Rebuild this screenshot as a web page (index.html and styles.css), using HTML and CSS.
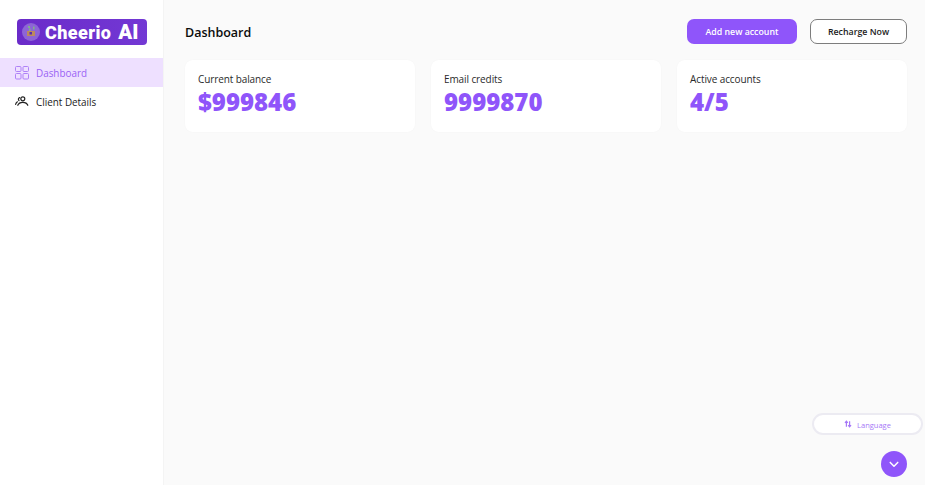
FILE: index.html
```html
<!DOCTYPE html>
<html lang="en">
<head>
<meta charset="utf-8">
<title>Cheerio AI Dashboard</title>
<link rel="stylesheet" href="styles.css">
</head>
<body>
<div class="app">
  <aside class="sidebar">
    <div class="logo">
      <svg class="logo-mark" viewBox="0 0 18 18" width="18" height="18">
        <circle cx="9" cy="9" r="9" fill="#8d64d6"/>
        <rect x="5" y="8" width="8" height="5" fill="#bd8a5e"/>
        <rect x="6" y="3" width="2" height="2" fill="#7fb08a"/>
        <rect x="7" y="5.500" width="1.500" height="2.500" fill="#7fb08a"/>
        <rect x="11" y="3.500" width="1.500" height="3" fill="#7fb08a"/>
        <rect x="7.500" y="9" width="2.500" height="2.500" fill="#5a2fb0"/>
      </svg>
      <span class="logo-text">Cheerio</span><span class="logo-ai">AI</span>
    </div>
    <nav class="nav">
      <a class="nav-item active">
        <svg class="nav-icon nav-icon-light" viewBox="0 0 14 14" width="14" height="14" fill="none" stroke="currentColor" stroke-width="1">
          <rect x=".5" y=".5" width="5.500" height="5" rx="1"/>
          <rect x="8" y=".5" width="5.500" height="5" rx="1"/>
          <rect x=".5" y="7.500" width="5.500" height="5.500" rx="1"/>
          <rect x="8" y="7.500" width="5.500" height="5.500" rx="1"/>
        </svg>
        <span>Dashboard</span>
      </a>
      <a class="nav-item">
        <svg class="nav-icon" viewBox="0 0 14 14" width="14" height="14" fill="none" stroke="currentColor" stroke-width="1.200" stroke-linecap="round">
          <circle cx="7.800" cy="3.800" r="2"/>
          <path d="M2.800 10.300c.7-2 2.600-3 5-3s4.300 1 5 3"/>
          <path d="M4.600 2.600a1.800 1.800 0 0 0-.6 3M2.400 6.800C1.500 7.400 .9 8.200 .6 9.400"/>
        </svg>
        <span>Client Details</span>
      </a>
    </nav>
  </aside>
  <main class="main">
    <header class="topbar">
      <h1 class="title">Dashboard</h1>
      <div class="actions">
        <button class="btn btn-primary">Add new account</button>
        <button class="btn btn-outline">Recharge Now</button>
      </div>
    </header>
    <section class="cards">
      <div class="card"><div class="card-label">Current balance</div><div class="card-value">$999846</div></div>
      <div class="card"><div class="card-label">Email credits</div><div class="card-value">9999870</div></div>
      <div class="card"><div class="card-label">Active accounts</div><div class="card-value">4/5</div></div>
    </section>
  </main>
</div>
<button class="lang">
  <svg viewBox="0 0 10 10" width="8" height="8" fill="none" stroke="currentColor" stroke-width="1.500">
    <path d="M3 8.500V2M1.200 3.500 3 1.500l1.800 2M7 1.500V8M5.200 6.500 7 8.500l1.800-2"/>
  </svg>
  <span class="lang-text">Language</span>
</button>
<button class="fab" aria-label="Collapse">
  <svg viewBox="0 0 12 8" width="10" height="7" fill="none" stroke="#fff" stroke-width="1.800" stroke-linecap="round" stroke-linejoin="round">
    <path d="M1.500 1.500 6 6l4.500-4.500"/>
  </svg>
</button>
</body>
</html>
```

FILE: styles.css
```css
* { box-sizing: border-box; }
html, body { margin: 0; height: 100%; }
body {
  font-family: "Open Sans", "Noto Sans", "Liberation Sans", sans-serif;
  background: #fafafa;
  color: #111;
  overflow: hidden;
}
.app { display: flex; height: 485px; }
.sidebar {
  width: 164px;
  flex: none;
  background: #fff;
  border-right: 1px solid #f4f4f4;
  padding-top: 19px;
}
.logo {
  display: flex;
  align-items: center;
  width: 130px;
  height: 26px;
  margin: 0 0 13px 17px;
  padding-left: 5px;
  border-radius: 4px;
  background: linear-gradient(90deg, #6a2bc9, #7338d4);
  color: #fff;
  font-family: "Roboto", "Open Sans", sans-serif;
  font-weight: 900;
}
.logo-mark { flex: none; margin-right: 5px; }
.logo-text { font-size: 18px; letter-spacing: .4px; }
.logo-ai { font-size: 20.500px; margin-left: 7px; }
.nav { display: flex; flex-direction: column; }
.nav-item {
  display: flex;
  align-items: center;
  height: 29px;
  padding-left: 15px;
  gap: 7px;
  font-size: 9.900px;
  color: #222;
}
.nav-item.active { background: #eee0ff; color: #9a63f5; }
.nav-icon { flex: none; }
.nav-icon-light { opacity: .75; }
.main { flex: 1; padding: 19px 18px 0 21px; min-width: 0; }
.topbar {
  display: flex;
  justify-content: space-between;
  align-items: center;
  height: 25px;
  margin-bottom: 16px;
}
.title { margin: 0; padding-top: 1px; font-size: 12.500px; font-weight: 600; color: #0c0c0c; }
.actions { display: flex; gap: 13px; }
.btn {
  height: 25px;
  border-radius: 7px;
  font-family: inherit;
  font-size: 8.800px;
  font-weight: 600;
  padding: 0;
}
.btn-primary { width: 110px; background: #8f55fa; color: #fff; border: 0; }
.btn-outline { width: 97px; background: #fff; color: #1c1c1c; border: 1px solid #7d7d7d; }
.cards { display: grid; grid-template-columns: repeat(3, 230px); gap: 16px; }
.card {
  height: 72px;
  background: #fff;
  border-radius: 8px;
  box-shadow: 0 0 2px rgba(0, 0, 0, .03);
  padding: 12px 13px;
}
.card-label { font-size: 10px; letter-spacing: -.1px; line-height: 15px; color: #2a2a2a; }
.card-value {
  font-size: 24px;
  font-weight: 800;
  line-height: 30px;
  color: #8f55fa;
}
.lang {
  position: absolute;
  left: 812px;
  top: 413px;
  width: 111px;
  height: 22px;
  display: flex;
  align-items: center;
  justify-content: center;
  gap: 5px;
  background: #fff;
  border: 2px solid #ecebf2;
  border-radius: 11px;
  color: #a678f7;
  font-family: inherit;
  font-size: 7.500px;
  padding: 0;
}
.lang-text { padding-top: 1px; }
.fab {
  position: absolute;
  left: 881px;
  top: 451px;
  width: 26px;
  height: 26px;
  display: flex;
  align-items: center;
  justify-content: center;
  border: 0;
  border-radius: 50%;
  background: #8f55fa;
  padding: 0;
}
```
